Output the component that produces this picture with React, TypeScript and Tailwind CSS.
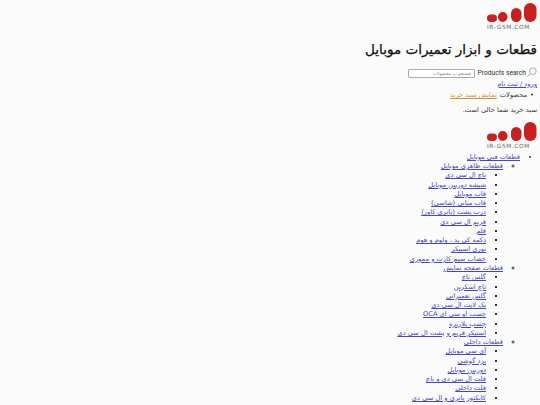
const Logo = () => (
  <div className="flex flex-col items-end w-[50px] h-[27px]">
    <svg width="50" height="20" viewBox="0 0 50 20" className="block">
      <rect x="0" y="11.5" width="10" height="7.5" rx="3.75" fill="#c8201f" />
      <rect x="11" y="9" width="9.5" height="10" rx="4.75" fill="#c8201f" />
      <rect x="24" y="5" width="10.5" height="14" rx="5.25" fill="#c8201f" />
      <rect x="37" y="0" width="12.5" height="19" rx="6.25" fill="#c8201f" />
    </svg>
    <span className="mt-[1px] text-[5.8px] leading-[6px] tracking-[0.65px] text-[#666] font-['DejaVu_Sans',sans-serif] whitespace-nowrap" dir="ltr">IR-GSM.COM</span>
  </div>
);

type Node = { t: string; c?: string[] };
const groups: Node[] = [
  { t: "قطعات ظاهری موبایل", c: ["تاچ ال سی دی", "شیشه دوربین موبایل", "قاب موبایل", "قاب میانی (شاسی)", "درب پشت (باتری کاور)", "فریم ال سی دی", "قلم", "دکمه کی پد ، ولوم و هوم", "توری اسپیکر", "خشاب سیم کارت و مموری"] },
  { t: "قطعات صفحه نمایش", c: ["گلس تاچ", "تاچ اسکرین", "گلس تعمیراتی", "بک لایت ال سی دی", "چسب او سی ای OCA", "چسب پلاریزه", "استیکر فریم و پشت ال سی دی"] },
  { t: "قطعات داخلی", c: ["آی سی موبایل", "برد گوشی", "دوربین موبایل", "فلت ال سی دی و تاچ", "فلت داخلی", "کانکتور باتری و ال سی دی"] },
];

const A = ({ children }: { children: React.ReactNode }) => (
  <a href="#" className="text-[#4545c8] underline">{children}</a>
);

export default function App() {
  return (
    <div dir="rtl" className="h-[405px] overflow-hidden bg-[#fbfbfb] text-[#333] text-[6.7px] leading-[9.27px] font-['DejaVu_Sans',sans-serif]">
      <div className="pt-[3px] pr-[3px]"><Logo /></div>
      <h1 className="mt-[11px] pr-[3px] text-[13.5px] leading-[17px] font-normal text-[#111] [-webkit-text-stroke:0.25px_#111]">قطعات و ابزار تعمیرات موبایل</h1>
      <div className="mt-[9px] pr-[3px] flex items-center h-[13px]">
        <svg width="10" height="10" viewBox="0 0 24 24" fill="none" stroke="#777" strokeWidth="1.4" className="-mt-[3px]" style={{ transform: "scaleX(-1)" }}>
          <circle cx="10" cy="10" r="8" /><path d="M16 16l7 7" />
        </svg>
        <span dir="ltr" className="text-[6.7px] mr-[1px] ml-[2px] font-['Roboto',sans-serif]">Products search</span>
        <input readOnly value="جستجو در محصولات" className="w-[67px] h-[9px] bg-white border border-[#aaa] rounded-[1px] px-[3px] text-[4.5px] text-[#888] text-right" />
      </div>
      <div className="pr-[3px]"><A>ورود / ثبت نام</A></div>
      <div className="pr-[6px] mt-[2px] flex gap-[3px]">
        <span>•</span><span>محصولات</span>
        <a href="#" className="text-[#e08a3c] underline">نمایش سبد خرید</a>
      </div>
      <p className="pr-[3px] mt-[5px]">سبد خرید شما خالی است.</p>
      <div className="pr-[3px] mt-[7px]"><Logo /></div>
      <ul className="mt-[4px] pr-[20px] list-disc">
        <li>
          <A>قطعات فنی موبایل</A>
          <ul className="pr-[17px] list-[circle]">
            {groups.map((g) => (
              <li key={g.t}>
                <A>{g.t}</A>
                <ul className="pr-[17px] list-[square]">
                  {g.c?.map((c) => <li key={c}><A>{c}</A></li>)}
                </ul>
              </li>
            ))}
          </ul>
        </li>
      </ul>
    </div>
  );
}
